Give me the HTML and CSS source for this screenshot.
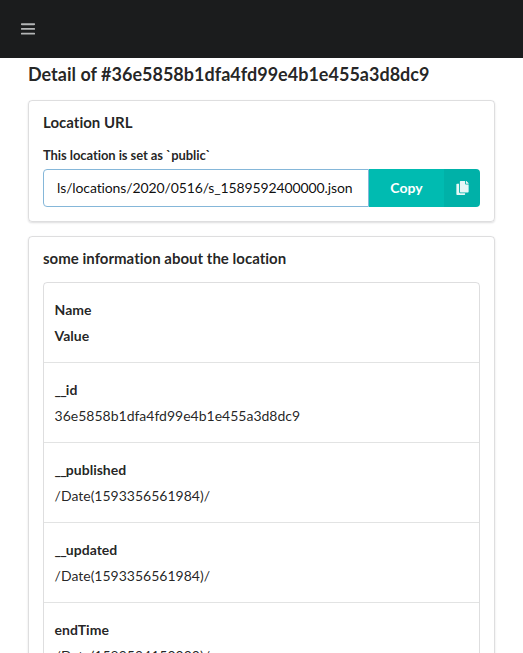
FILE: index.html
```html
<!DOCTYPE html>
<html lang="en">
<head>
<meta charset="utf-8">
<title>Location detail</title>
<link rel="stylesheet" href="styles.css">
</head>
<body>
<header class="topbar">
  <svg class="bars" viewBox="0 0 14 14"><path d="M.8 2.2h12.4M.8 6.9h12.4M.8 11.6h12.4"/></svg>
</header>
<main class="page">
  <h1 class="title">Detail of #36e5858b1dfa4fd99e4b1e455a3d8dc9</h1>
  <section class="segment">
    <h2 class="heading">Location URL</h2>
    <label class="label">This location is set as `public`</label>
    <div class="action">
      <div class="url">ls/locations/2020/0516/s_1589592400000.json</div>
      <button class="copy"><span class="copy-text">Copy</span><span class="copy-icon"><svg viewBox="0 0 448 512"><path d="M320 448v40c0 13-11 24-24 24H24c-13 0-24-11-24-24V120c0-13 11-24 24-24h72v296c0 31 25 56 56 56zm0-344V0H152c-13 0-24 11-24 24v368c0 13 11 24 24 24h272c13 0 24-11 24-24V128H344c-13 0-24-11-24-24zm121-31L375 7c-5-5-11-7-17-7h-6v96h96v-6c0-6-3-13-7-17z"/></svg></span></button>
    </div>
  </section>
  <section class="segment info">
    <h2 class="heading">some information about the location</h2>
    <div class="table">
      <div class="row"><b>Name</b><b>Value</b></div>
      <div class="row"><b><i class="prefix">__</i>id</b><span>36e5858b1dfa4fd99e4b1e455a3d8dc9</span></div>
      <div class="row"><b><i class="prefix">__</i>published</b><span>/Date(1593356561984)/</span></div>
      <div class="row"><b><i class="prefix">__</i>updated</b><span>/Date(1593356561984)/</span></div>
      <div class="row"><b>endTime</b><span>/Date(1589594150000)/</span></div>
    </div>
  </section>
</main>
</body>
</html>
```
FILE: styles.css
```css
* { box-sizing: border-box; }
html, body { height: 100%; overflow: hidden; }
body { margin: 0; background: #fff; color: rgba(0,0,0,.87); font: 14px/20px Lato, sans-serif; font-variant-ligatures: none; }
.topbar { height: 58px; background: #1b1c1d; display: flex; align-items: center; padding-left: 21px; }
.bars { width: 14px; height: 14px; fill: none; stroke: #b4b5b6; stroke-width: 1.9; stroke-linecap: round; }
.page { padding: 5px 28px 0; }
.title { margin: 0 0 14px; font-size: 18px; line-height: 23px; font-weight: 700; letter-spacing: .01px; white-space: nowrap; }
.segment { border: 1px solid rgba(34,36,38,.15); border-radius: 4px; padding: 14px; margin-bottom: 14px; box-shadow: 0 1px 2px rgba(34,36,38,.15); height: 122px; }
.info { height: auto; }
.heading { margin: -1px 0 0; font-size: 15px; line-height: 17px; font-weight: 700; letter-spacing: .01px; }
.label { display: block; margin: 15px 0 4px; font-size: 13px; line-height: 19px; font-weight: 700; letter-spacing: -.08px; }
.action { display: flex; height: 38px; }
.url { flex: 1; min-width: 0; border: 1px solid #85b7d9; border-right-width: 1px; border-radius: 4px 0 0 4px; padding: 9px 13px; line-height: 18px; white-space: nowrap; letter-spacing: -.12px; color: rgba(0,0,0,.95); }
.copy { flex: none; width: 111px; border: 0; padding: 0; display: flex; overflow: hidden; background: #00bbb1; border-radius: 0 4px 4px 0; color: #fff; font: 700 14px/38px Lato, sans-serif; }
.copy-text { flex: 1; }
.copy-icon { width: 36px; height: 38px; display: flex; align-items: center; justify-content: center; background: rgba(0,0,0,.05); }
.copy-icon svg { width: 13px; height: 14px; fill: #fff; opacity: .9; }
.table { margin-top: 15px; border: 1px solid rgba(34,36,38,.15); border-radius: 4px; }
.row { height: 80px; padding: 14px 10.6px; display: flex; flex-direction: column; border-bottom: 1px solid rgba(34,36,38,.13); }
.row b, .row span { line-height: 26px; }
.prefix { font-style: normal; letter-spacing: -.9px; }
```
